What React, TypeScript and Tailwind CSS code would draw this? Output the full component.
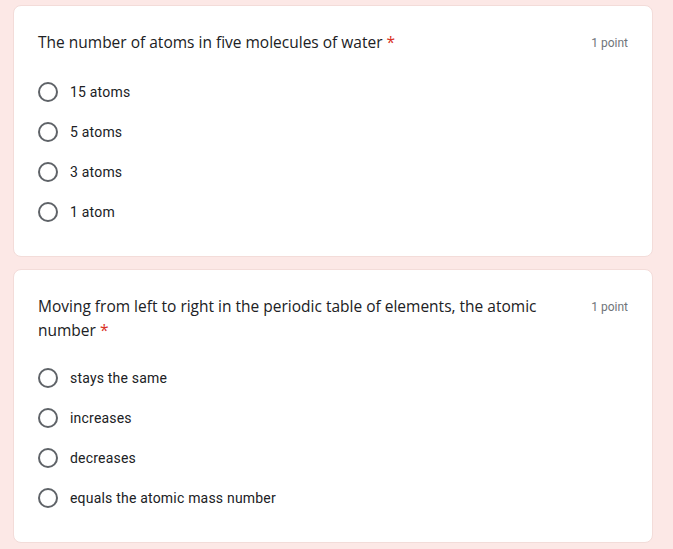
import React from 'react';

type Question = {
  title: string;
  options: string[];
  gap: string;
};

const questions: Question[] = [
  {
    title: 'The number of atoms in five molecules of water',
    options: ['15 atoms', '5 atoms', '3 atoms', '1 atom'],
    gap: 'mt-[17px]',
  },
  {
    title: 'Moving from left to right in the periodic table of elements, the atomic number',
    options: ['stays the same', 'increases', 'decreases', 'equals the atomic mass number'],
    gap: 'mt-[16px]',
  },
];

function Radio() {
  return <span className="block h-5 w-5 shrink-0 rounded-full border-2 border-[#5f6368]" />;
}

function QuestionCard({ q }: { q: Question }) {
  return (
    <div className="rounded-lg border border-[#f3dcd9] bg-white px-6 pt-6 pb-6">
      <div className="flex items-start justify-between gap-4">
        <div className="max-w-[530px] text-[15.5px] leading-6 text-[#202124] font-['Open_Sans',sans-serif]">
          {q.title} <span className="text-[#d93025]">*</span>
        </div>
        <div className="shrink-0 pt-[1px] text-[12px] leading-6 text-[#70757a] font-['Roboto',sans-serif]">1 point</div>
      </div>
      <div className={q.gap}>
        {q.options.map((o) => (
          <div key={o} className="flex h-10 items-center gap-3">
            <Radio />
            <span className="text-[14px] tracking-[0.2px] text-[#202124] font-['Roboto',sans-serif]">{o}</span>
          </div>
        ))}
      </div>
    </div>
  );
}

export default function App() {
  return (
    <div className="min-h-[549px] bg-[#fce8e6] pt-[5px] pl-[13px] pr-[20px] pb-4">
      <div className="flex w-[640px] flex-col gap-3">
        {questions.map((q) => (
          <QuestionCard key={q.title} q={q} />
        ))}
      </div>
    </div>
  );
}
